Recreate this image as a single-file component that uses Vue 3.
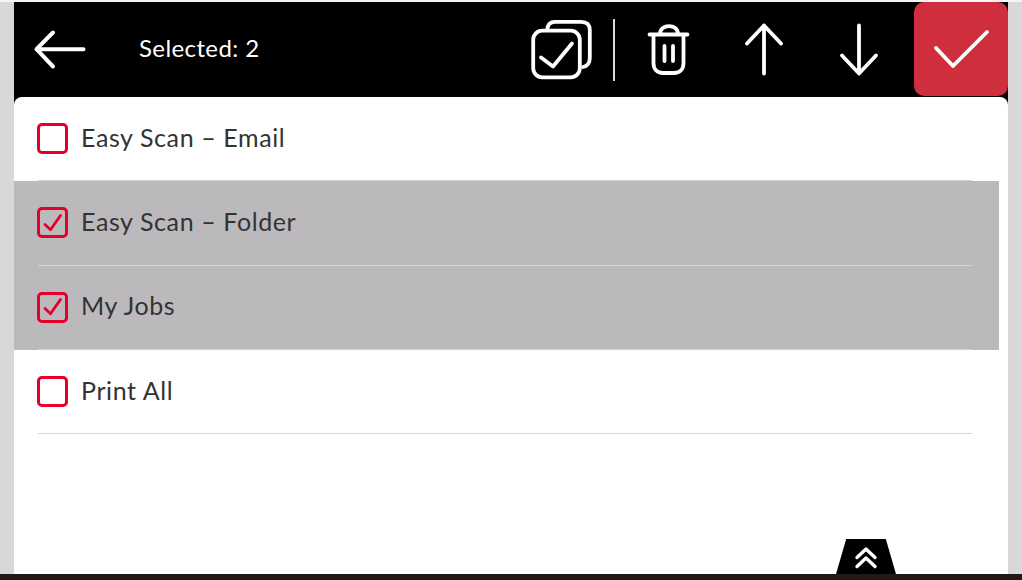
<template>
  <div class="screen">
    <div class="top-edge"></div>
    <div class="panel">
      <header class="toolbar">
        <button class="back">
          <svg width="60" height="60" viewBox="0 0 60 60">
            <path d="M6.500 29.200H53.500M23 12.500L6.500 29.200L23 46.500" />
          </svg>
        </button>
        <span class="selected">Selected: {{ selectedCount }}</span>
        <div class="actions">
          <svg class="copy" width="70" height="70" viewBox="0 0 70 70">
            <rect x="7.200" y="15.700" width="46.600" height="46.600" rx="9" />
            <path d="M21.200 15C21.500 9.500 24 6.800 29 6.800H55C61 6.800 63.800 9.500 63.800 15V43C63.800 48 62 51 57 52" />
            <path d="M15 42.500L27 51.500L46 28.500" />
          </svg>
          <span class="divider"></span>
          <button class="action">
            <svg width="60" height="70" viewBox="0 0 60 70">
              <path d="M10.500 19.500H48.500M21 19C21 8.500 39 8.500 39 19M14.500 20V48C14.500 54 18 58 24 58H35C41 58 44.500 54 44.500 48V20M25.500 31V46M34 31V46" />
            </svg>
          </button>
          <button class="action">
            <svg width="60" height="70" viewBox="0 0 60 70">
              <path d="M30 10.500V58.500M13 28.500L30 10.500L47 28.500" />
            </svg>
          </button>
          <button class="action">
            <svg width="60" height="70" viewBox="0 0 60 70">
              <path d="M30 10.500V58.500M13 40.500L30 58.500L47 40.500" />
            </svg>
          </button>
          <button class="confirm">
            <svg width="70" height="60" viewBox="0 0 70 60">
              <path d="M10 29L27 47L61 13" />
            </svg>
          </button>
        </div>
      </header>

      <div class="card">
        <ul class="list">
          <li v-for="item in items" :key="item.name" class="row" :class="{ active: item.checked }">
            <div class="row-inner">
              <span class="box">
                <svg v-if="item.checked" width="26" height="26" viewBox="0 0 26 26">
                  <path d="M5 14.500L10.500 19.700L20.500 5.500" />
                </svg>
              </span>
              <span class="name">{{ item.name }}</span>
            </div>
          </li>
        </ul>
        <button class="handle">
          <svg width="24" height="24" viewBox="0 0 24 24">
            <path d="M3 11.500L12 3L21 11.500M3 20.500L12 12L21 20.500" />
          </svg>
        </button>
      </div>
    </div>
    <div class="bottom-bar"></div>
  </div>
</template>

<script setup>
import { computed, ref } from 'vue';

const items = ref([
  { name: 'Easy Scan – Email', checked: false },
  { name: 'Easy Scan – Folder', checked: true },
  { name: 'My Jobs', checked: true },
  { name: 'Print All', checked: false }
]);

const selectedCount = computed(() => items.value.filter((i) => i.checked).length);
</script>

<style>
html,
body {
  margin: 0;
  overflow: hidden;
}
</style>

<style scoped>
.screen {
  width: 1022px;
  height: 580px;
  display: flex;
  flex-direction: column;
  background: #d8d8d8;
  font-family: "Lato", "Liberation Sans", sans-serif;
}

.top-edge {
  height: 2px;
  background: #f4f4f4;
}

.bottom-bar {
  height: 6px;
  background: #231815;
}

.panel {
  flex: 1;
  min-height: 0;
  margin: 0 14px;
  display: flex;
  flex-direction: column;
  background: #000;
}

button {
  border: 0;
  padding: 0;
  background: none;
  display: flex;
  align-items: center;
  justify-content: center;
}

svg {
  display: block;
  fill: none;
  stroke: #fff;
  stroke-linecap: round;
  stroke-linejoin: round;
}

.toolbar {
  height: 95px;
  flex: none;
  display: flex;
  align-items: center;
}

.back {
  margin-left: 16px;
}

.back svg {
  stroke-width: 4;
}

.selected {
  margin-left: 49px;
  padding-bottom: 4px;
  color: #fff;
  font-size: 24px;
  letter-spacing: 0.4px;
}

.actions {
  margin-left: auto;
  display: flex;
  align-items: center;
  height: 100%;
}

.actions svg {
  stroke-width: 3.800;
}

.divider {
  width: 2px;
  height: 62px;
  margin: 0 6px 0 17px;
  background: #dcdcdc;
}

.action {
  width: 95px;
  height: 100%;
}

.confirm {
  width: 94px;
  height: 94px;
  margin-left: 8px;
  align-self: flex-start;
  background: #cf2e3c;
  border-radius: 10px;
}

.card {
  position: relative;
  flex: 1;
  min-height: 0;
  background: #fff;
  border-radius: 8px 8px 0 0;
}

.list {
  list-style: none;
  margin: 0;
  padding: 0;
}

.row {
  height: 84.33px;
  padding-left: 24px;
  margin-right: 9px;
  box-sizing: border-box;
}

.row.active {
  background: #bcb9bc;
}

.row-inner {
  height: 100%;
  box-sizing: border-box;
  margin-right: 27px;
  display: flex;
  align-items: center;
  gap: 13px;
  border-bottom: 1px solid #d4d4d4;
}

.box {
  width: 31px;
  height: 31px;
  margin-left: -1px;
  box-sizing: border-box;
  border: 3px solid #e4002b;
  border-radius: 5px;
  display: flex;
  align-items: center;
  justify-content: center;
}

.box svg {
  flex: none;
  stroke: #e4002b;
  stroke-width: 2.800;
}

.name {
  padding-bottom: 4px;
  color: #333;
  font-size: 25px;
  letter-spacing: 0.6px;
}

.handle {
  position: absolute;
  left: 822px;
  bottom: 0;
  width: 60px;
  height: 35px;
  padding-top: 2px;
  box-sizing: border-box;
  background: #000;
  clip-path: polygon(17% 0, 83% 0, 100% 100%, 0 100%);
}

.handle svg {
  stroke-width: 3.400;
}
</style>
